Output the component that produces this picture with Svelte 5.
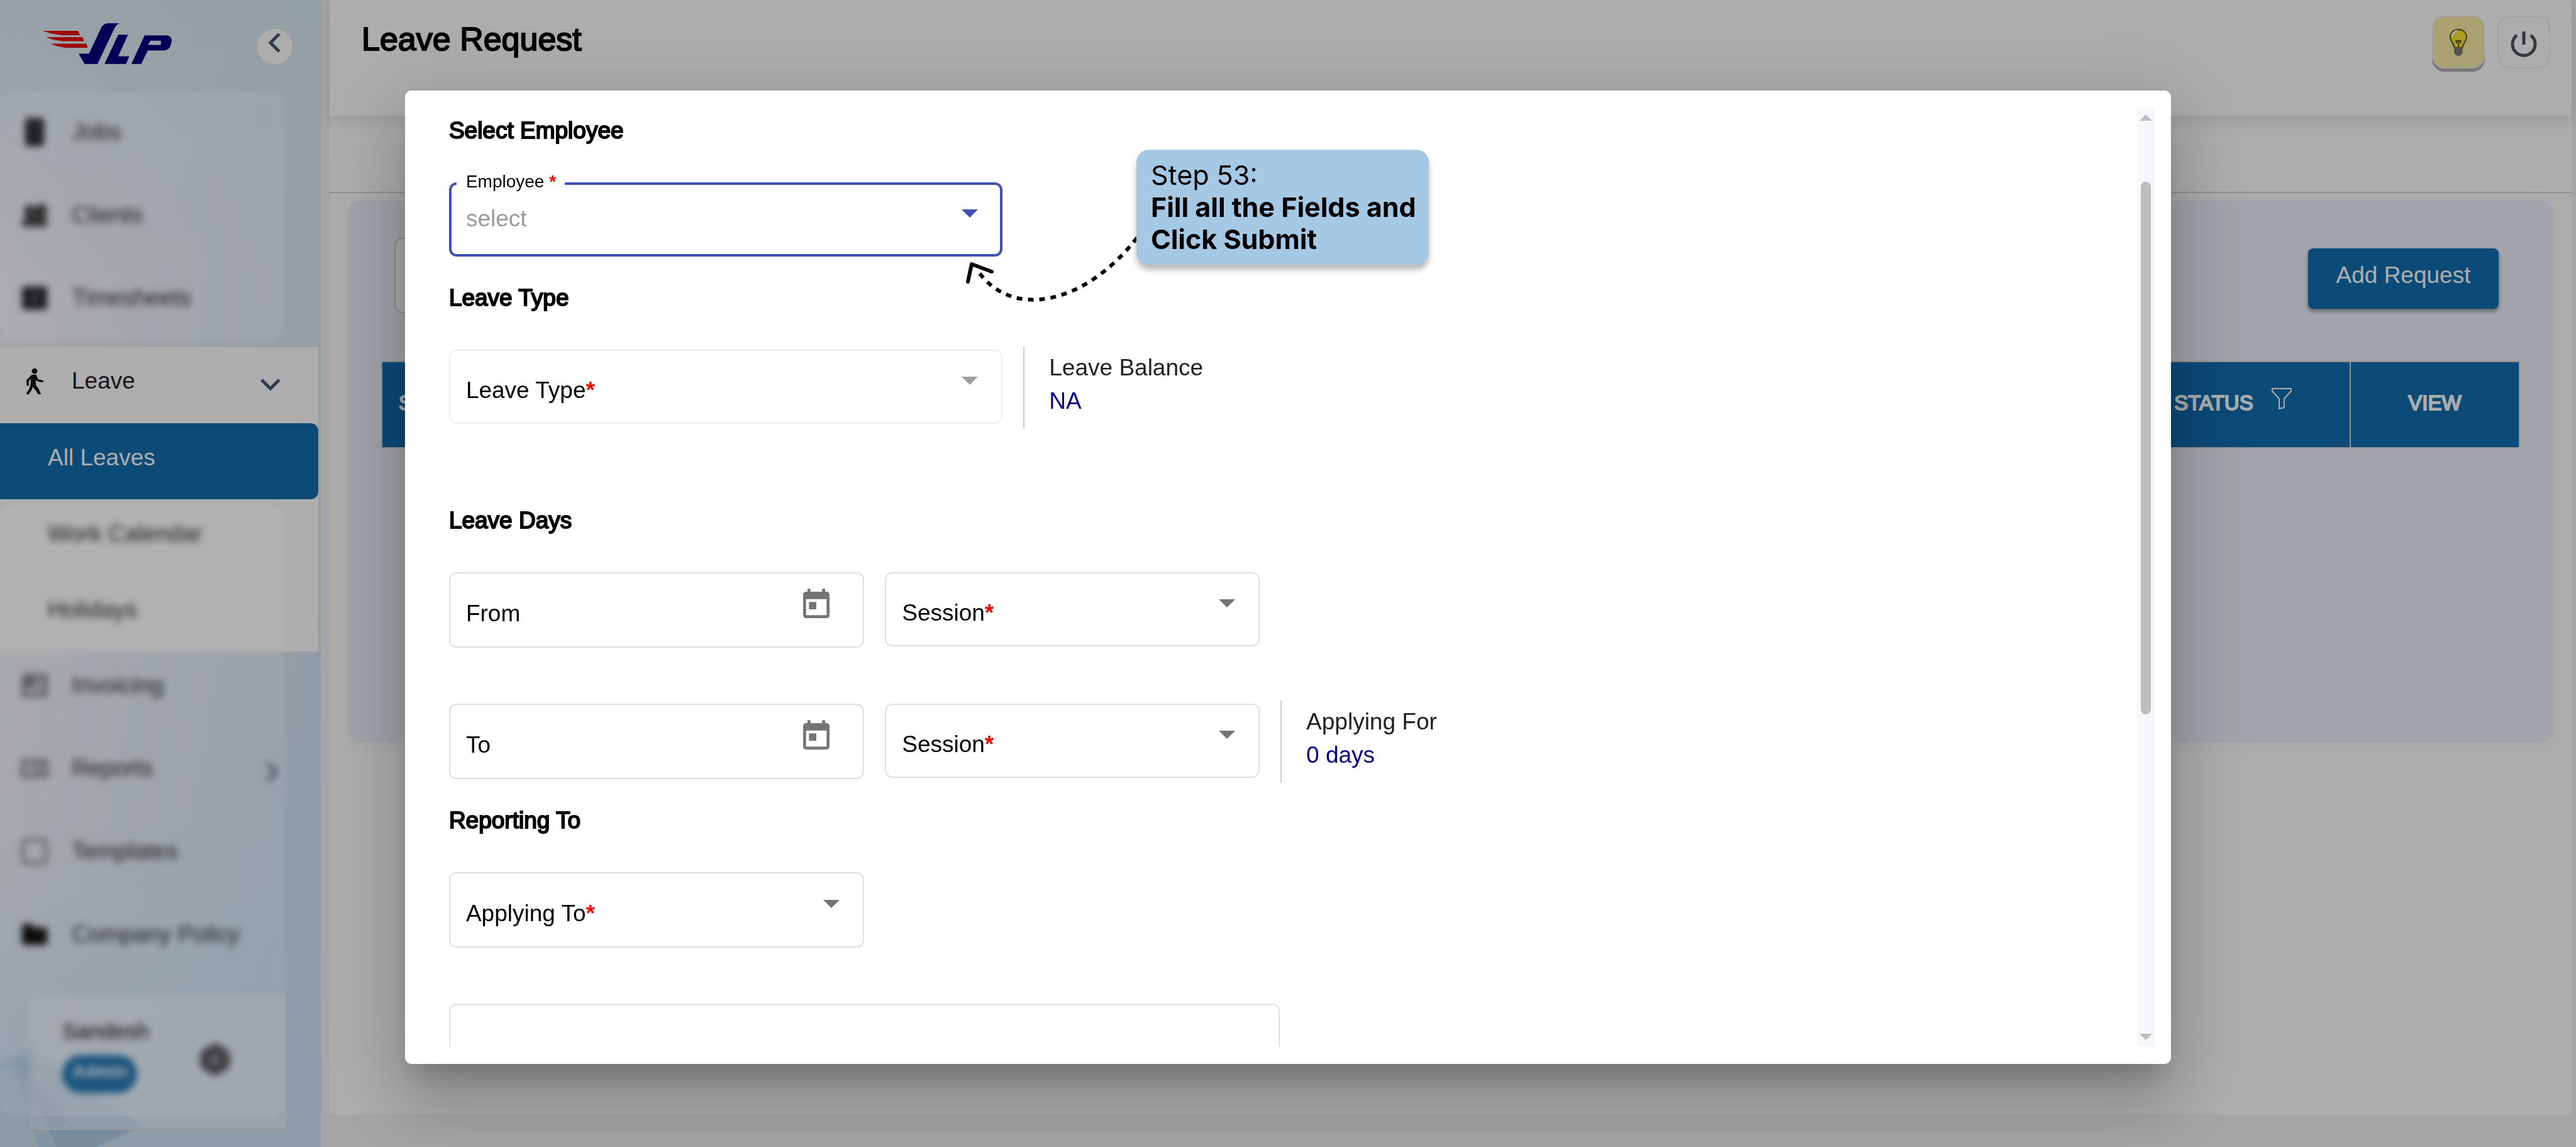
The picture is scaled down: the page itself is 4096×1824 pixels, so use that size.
<script>
  const topItems = [
    { label: 'Jobs', icon: 'jobs' },
    { label: 'Clients', icon: 'clients' },
    { label: 'Timesheets', icon: 'timesheets' }
  ];
  const leaveItems = ['All Leaves', 'Work Calendar', 'Holidays'];
  const lowerItems = [
    { label: 'Invoicing', icon: 'invoicing' },
    { label: 'Reports', icon: 'reports', more: true },
    { label: 'Templates', icon: 'templates' },
    { label: 'Company Policy', icon: 'policy' }
  ];
  const dayRows = [
    { id: 'from', label: 'From' },
    { id: 'to', label: 'To', aside: true }
  ];
</script>

{#snippet icon(name)}
  <svg class="nav-icon" viewBox="0 0 24 24" aria-hidden="true">
    {#if name === 'jobs'}
      <path fill="#0d0f10" d="M6 0h12q2 0 2 2v20q0 2-2 2H6q-2 0-2-2V2q0-2 2-2zm2 6v1h8V6zm0 9v1h8v-1z" fill-rule="evenodd" />
    {:else if name === 'clients'}
      <path fill="#333" d="M1 22c0-6 2-8 5-9a5 5 0 1 1 5-1l1 1 1-2a5.500 5.500 0 1 1 7 2c2 1 3 4 3 9z" />
    {:else if name === 'timesheets'}
      <path fill="#16181a" d="M3 2h18q2 0 2 2v16q0 2-2 2H3q-2 0-2-2V4q0-2 2-2zm7 7v1h4V9zm0 4v1h4v-1z" fill-rule="evenodd" />
    {:else if name === 'walk'}
      <path fill="#111" d="M12 1a2.400 2.400 0 1 1 0 4.800A2.400 2.400 0 0 1 12 1zM9.500 6.500h4l1.500 4 4.500 1v1.700l-5.600-1-.8-1.700v5l2.500 3.500 2 4.500H15l-2-3.500-2.500-3-1.500 3.500-2 3H4.500l3-5 1.200-5V10L7 12v4H5v-5z" />
    {:else if name === 'invoicing'}
      <path fill="#666" d="M3 2h18q2 0 2 2v16q0 2-2 2H3q-2 0-2-2V4q0-2 2-2zm1 3v14h16V5z" fill-rule="evenodd" />
      <path fill="#666" d="M5 6h8v7H5zM15 7h4v2h-4zM15 11h4v2h-4zM5 15h14v1H5z" />
    {:else if name === 'reports'}
      <path fill="#777" d="M2 4h20q2 0 2 2v12q0 2-2 2H2q-2 0-2-2V6q0-2 2-2zm1 3v10h18V7z" fill-rule="evenodd" />
      <path fill="#888" d="M5 9h3v2H5zM10 8h9v2h-9zM5 13h3v2H5zM10 11h9v2h-9zM10 14h9v2h-9z" />
    {:else if name === 'templates'}
      <rect x="2" y="2" width="20" height="20" rx="3" fill="none" stroke="#555" stroke-width="2" />
    {:else}
      <path fill="#000" d="M2 3h7l3 3h9q2 0 2 2v11q0 2-2 2H3q-2 0-2-2V5q0-2 1-2z" />
    {/if}
  </svg>
{/snippet}

{#snippet caret()}
  <svg class="caret" viewBox="0 0 26 13" aria-hidden="true"><path d="M0 0h26L13 13z" /></svg>
{/snippet}

<div class="shell">
  <aside class="sidebar">
    <svg class="facets" viewBox="0 0 260 180" aria-hidden="true">
      <path fill="#bfdaf0" d="M0 46L47 24L230 148L155 180H0Z" />
      <path fill="#cfe4f2" d="M0 50L22 60L62 180H0Z" />
      <path fill="#b3cee6" d="M20 44L47 40V96L90 180H150L210 150L120 150L60 90Z" />
    </svg>
    <div class="brand">
      <svg class="logo" viewBox="68 37 205 65" role="img" aria-label="VLP">
        <g fill="#eb0f00">
          <path d="M68 49H124L127.500 56H98Q80 54 68 49Z" />
          <path d="M73.500 59H131.500L133.500 65.500H100Q84 64 73.500 59Z" />
          <path d="M80.500 69.500H137.500L139.500 76H105Q90 74 80.500 69.500Z" />
        </g>
        <g fill="#03007e">
          <path d="M125 85.300H141.500L161 44Q165 37 172 37H190Q184 39.500 180.700 47.800L155 101.700H134.500Z" />
          <path d="M188 55.300H203.500L188 89.400H205.500L200.500 101.700H166.200Z" />
          <path fill-rule="evenodd" d="M230 56.300H265Q273 57 273 65L271 73Q268.700 80.200 260 80.200H235L224.500 101.700H208.800ZM239 64.800L235.600 71.600H255.500L256.300 64.800Z" />
        </g>
      </svg>
      <button class="collapse" aria-label="Collapse menu">
        <svg viewBox="0 0 20 32" aria-hidden="true"><path d="M17 2L3 16L17 30" /></svg>
      </button>
    </div>
    <nav>
      {#each topItems as item}
        <a class="item" href="#{item.icon}">{@render icon(item.icon)}<span>{item.label}</span></a>
      {/each}
      <div class="group">
        <a class="item open" href="#leave">
          {@render icon('walk')}<span>Leave</span>
          <svg class="chevron" viewBox="0 0 34 34" aria-hidden="true"><path d="M3 9L17 23L31 9" /></svg>
        </a>
        {#each leaveItems as label, i}
          <a class="sub" class:active={i === 0} href="#leave-{i}">{label}</a>
        {/each}
      </div>
      {#each lowerItems as item}
        <a class="item" href="#{item.icon}">
          {@render icon(item.icon)}<span>{item.label}</span>
          {#if item.more}
            <svg class="chevron" viewBox="0 0 34 34" aria-hidden="true"><path d="M7 3L21 17L7 31" /></svg>
          {/if}
        </a>
      {/each}
    </nav>
    <div class="profile">
      <div class="who">
        <span class="name">Sandesh</span>
        <span class="role">Admin</span>
      </div>
      <button class="gear" aria-label="Settings">
        <svg viewBox="0 0 50 54" aria-hidden="true"><path fill="#505254" fill-rule="evenodd" d="M18 2H32L36 8L44 10L50 22L48 27L50 32L44 44L36 46L32 52H18L14 46L6 44L0 32L2 27L0 22L6 10L14 8ZM25 23A4 4 0 1 0 25 31A4 4 0 1 0 25 23Z" /></svg>
      </button>
    </div>
  </aside>

  <main class="page">
    <header>
      <h1>Leave Request</h1>
      <div class="tools">
        <button class="tool bulb" aria-label="Tips">
          <svg viewBox="0 0 28 44" aria-hidden="true">
            <path d="M14 2C6 2 1 7 1 14C1 20 6 23 8 31H20C22 23 27 20 27 14C27 7 22 2 14 2Z" fill="#fbe72a" stroke="#5a5520" stroke-width="2" />
            <path d="M4 13Q5 6 12 4" fill="none" stroke="#fff" stroke-width="3" />
            <path d="M9 20H19M14 20V31M11 21V24M17 21V24" fill="none" stroke="#6a5a00" stroke-width="2" />
            <path d="M8 31H20V39L17 43H11L8 39Z" fill="#8a8a86" stroke="#55554f" stroke-width="1" />
            <path d="M8 35H20M9 39H19" stroke="#4a4a45" stroke-width="1" />
          </svg>
        </button>
        <button class="tool power" aria-label="Log out">
          <svg viewBox="0 0 42 42" aria-hidden="true"><path d="M21 1V22M10 7A18 18 0 1 0 32 7" fill="none" stroke="#4c5561" stroke-width="5" /></svg>
        </button>
      </div>
    </header>
    <div class="tabs"></div>
    <section class="panel">
      <div class="toolbar">
        <input class="search" type="search" aria-label="Search" />
        <button class="add">Add Request</button>
      </div>
      <table>
        <thead>
          <tr>
            <th class="serial">S.NO</th>
            <th class="status">
              <span>STATUS
                <svg viewBox="0 0 34 36" aria-hidden="true"><path d="M2 2H32V6L21 18V32L13 34V18L2 6Z" fill="none" stroke="#fff" stroke-width="2" stroke-linejoin="round" /></svg>
              </span>
            </th>
            <th class="view">VIEW</th>
          </tr>
        </thead>
      </table>
    </section>
  </main>
</div>

<div class="backdrop">
  <div class="frost upper"></div>
  <div class="frost lower"></div>

  <div class="modal" role="dialog" aria-label="Leave request form">
    <form class="body">
      <h2>Select Employee</h2>
      <div class="row">
        <div class="field wide focused">
          <label for="employee">Employee <b>*</b></label>
          <select id="employee"><option>select</option></select>
          {@render caret()}
        </div>
      </div>

      <h2>Leave Type</h2>
      <div class="row">
        <div class="field wide disabled">
          <label for="type">Leave Type<b>*</b></label>
          <select id="type" disabled><option></option></select>
          {@render caret()}
        </div>
        <div class="note"><span>Leave Balance</span><span class="value">NA</span></div>
      </div>

      <h2 class="spaced">Leave Days</h2>
      {#each dayRows as row}
        <div class="row days">
          <div class="field date">
            <label for={row.id}>{row.label}</label>
            <input id={row.id} type="text" />
            <svg class="calendar" viewBox="0 0 24 24" aria-hidden="true"><path d="M19 3h-1V1h-2v2H8V1H6v2H5c-1.110 0-1.990.9-1.990 2L3 19c0 1.100.89 2 2 2h14c1.100 0 2-.9 2-2V5c0-1.100-.9-2-2-2zm0 16H5V8h14v11zM7 10h5v5H7z" /></svg>
          </div>
          <div class="field session">
            <label for="{row.id}-session">Session<b>*</b></label>
            <select id="{row.id}-session"><option></option></select>
            {@render caret()}
          </div>
          {#if row.aside}
            <div class="note"><span>Applying For</span><span class="value">0 days</span></div>
          {/if}
        </div>
      {/each}

      <h2>Reporting To</h2>
      <div class="row">
        <div class="field date">
          <label for="approver">Applying To<b>*</b></label>
          <select id="approver"><option></option></select>
          {@render caret()}
        </div>
      </div>
      <textarea aria-label="Reason"></textarea>
    </form>

    <div class="scrollbar" aria-hidden="true">
      <svg viewBox="0 0 20 10"><path d="M10 0L20 10H0Z" /></svg>
      <div class="track"><div class="thumb"></div></div>
      <svg viewBox="0 0 20 10"><path d="M0 0H20L10 10Z" /></svg>
    </div>

    <svg class="pointer" viewBox="1530 370 285 115" aria-hidden="true">
      <path d="M1808 378C1725 485 1607 510 1553 428" stroke-dasharray="9 9" />
      <path d="M1539 448L1545 420L1577 432" stroke-linecap="round" stroke-linejoin="round" />
    </svg>
    <div class="callout">Step 53:<br /><strong>Fill all the Fields and<br />Click Submit</strong></div>
  </div>
</div>

<style>
  :global(body) {
    margin: 0;
    overflow: hidden;
    background: #f3f3f3;
  }
  :global(#app) {
    font-family: 'Liberation Sans', Arial, sans-serif;
    font-size: 37px;
    color: #000;
  }
  .shell,
  .backdrop,
  .shell *,
  .backdrop * {
    box-sizing: border-box;
  }
  button,
  input,
  select,
  textarea {
    font: inherit;
    border: 0;
    margin: 0;
    padding: 0;
    background: none;
  }
  a {
    color: inherit;
    text-decoration: none;
  }
  svg {
    display: block;
  }

  .shell {
    display: flex;
    min-height: 100vh;
    padding-right: 7px;
  }

  /* Sidebar */
  .sidebar {
    position: relative;
    flex: none;
    width: 511px;
    margin-right: 13px;
    display: flex;
    flex-direction: column;
    background:
      linear-gradient(172deg, rgba(214, 234, 246, 0.8), transparent 25%, transparent 70%, rgba(209, 232, 250, 0.9) 95%),
      linear-gradient(100deg, #f8f9fb, #eaeff6 35%, #dceaf3 70%, #d3e6f7 90%, #cfe6f2);
  }
  .facets {
    position: absolute;
    left: 0;
    bottom: 0;
    width: 260px;
    height: 180px;
  }
  .brand {
    display: flex;
    align-items: flex-start;
    justify-content: space-between;
    padding: 37px 44px 0 68px;
    height: 156px;
  }
  .logo {
    width: 205px;
    height: 65px;
  }
  .collapse {
    width: 60px;
    height: 60px;
    margin-top: 7px;
    border-radius: 50%;
    border: 2px solid #e8e8e8;
    background: #fff;
    display: flex;
    justify-content: center;
    padding-top: 6px;
  }
  .collapse svg {
    width: 20px;
    height: 32px;
  }
  .collapse path,
  .chevron path {
    fill: none;
    stroke: #44546c;
    stroke-width: 5;
  }
  .item,
  .sub {
    display: flex;
    align-items: center;
    height: 121px;
    padding-bottom: 14px;
    color: #212121;
  }
  .item {
    margin-bottom: 11px;
    padding-left: 33px;
    gap: 37px;
  }
  .nav-icon {
    width: 44px;
    height: 44px;
  }
  .chevron {
    width: 34px;
    height: 34px;
    margin: 12px 59px 0 auto;
  }
  .group {
    width: 506px;
    background: #fff;
  }
  .item.open {
    margin: 0;
  }
  .sub {
    padding-left: 76px;
    padding-bottom: 11px;
  }
  .sub.active {
    background: #136eb2;
    color: #fff;
    border-radius: 0 12px 12px 0;
  }
  .profile {
    position: relative;
    margin: 18px 54px 26px 47px;
    height: 215px;
    display: flex;
    justify-content: space-between;
    padding: 36px 88px 0 50px;
    border: 2px solid #e2e4e2;
    border-radius: 10px;
    background: rgba(255, 255, 255, 0.4);
  }
  .who {
    display: flex;
    flex-direction: column;
    align-items: flex-start;
    gap: 18px;
    font-size: 35px;
    line-height: 40px;
  }
  .role {
    height: 60px;
    padding: 0 16px;
    line-height: 52px;
    font-size: 28px;
    font-weight: bold;
    color: #fff;
    background: #136eb2;
    border-radius: 30px;
  }
  .gear {
    width: 50px;
    height: 54px;
    margin-top: 38px;
  }

  /* Page */
  .page {
    flex: 1;
    min-width: 0;
    background: #fff;
    margin-bottom: 52px;
  }
  header {
    height: 184px;
    padding: 25px 34px 0 51px;
    display: flex;
    justify-content: space-between;
    align-items: flex-start;
    box-shadow: 0 8px 24px rgba(0, 0, 0, 0.12);
  }
  h1 {
    margin: 7px 0 0;
    font-size: 52px;
    line-height: 60px;
    font-weight: 400;
    -webkit-text-stroke: 2px #000;
  }
  .tools {
    display: flex;
    gap: 20px;
  }
  .tool {
    display: flex;
    justify-content: center;
    width: 84px;
    height: 84px;
    padding-top: 22px;
    border: 2px solid #f0f0f0;
    border-radius: 20px;
  }
  .tool.bulb {
    background: #faeda4;
    border-color: #eee;
    padding-top: 18px;
    box-shadow: 0 5px 0 #b0b0b0;
  }
  .bulb svg {
    width: 28px;
    height: 44px;
  }
  .power svg {
    width: 42px;
    height: 42px;
  }
  .tabs {
    height: 123px;
    border-bottom: 2px solid #d2d2d2;
  }
  .panel {
    margin: 12px 28px 0;
    padding: 59px 54px 0;
    min-height: 862px;
    border-radius: 22px;
    background: #edf4fd;
    box-shadow: 0 4px 28px rgba(0, 0, 0, 0.03);
  }
  .toolbar {
    display: flex;
    justify-content: space-between;
    align-items: center;
    padding: 0 34px 0 21px;
  }
  .search {
    width: 700px;
    height: 120px;
    background: #fff;
    border: 2px solid #d0d0d0;
    border-radius: 14px;
  }
  .add {
    width: 303px;
    height: 96px;
    margin-top: 10px;
    padding-bottom: 10px;
    border-radius: 8px;
    background: #136eb2;
    color: #fff;
    box-shadow: 0 4px 6px rgba(0, 0, 0, 0.4);
  }
  table {
    width: 100%;
    margin-top: 76px;
    border-collapse: collapse;
    table-layout: fixed;
    color: #fff;
    background: #136eb2;
    font-size: 33px;
  }
  th {
    height: 137px;
    padding: 0 0 6px;
    border: 2px solid #d6d6d6;
    font-weight: 400;
    -webkit-text-stroke: 2px #fff;
  }
  .serial {
    text-align: left;
    padding-left: 26px;
  }
  .status {
    width: 372px;
  }
  .status span {
    display: flex;
    justify-content: center;
    gap: 28px;
  }
  .status svg {
    width: 34px;
    height: 36px;
    margin-top: -6px;
  }
  .view {
    width: 269px;
  }

  /* Overlay */
  .backdrop {
    position: fixed;
    inset: 0;
    display: flex;
    justify-content: center;
    padding: 144px 0 132px;
    background: rgba(0, 0, 0, 0.32);
  }
  .frost {
    position: absolute;
    left: 0;
    width: 452px;
    border-radius: 20px;
    background: rgba(255, 255, 255, 0.06);
    backdrop-filter: blur(6px);
  }
  .frost.upper {
    top: 146px;
    height: 396px;
  }
  .frost.lower {
    top: 802px;
    height: 973px;
  }
  .modal {
    position: relative;
    display: flex;
    width: 68.56vw;
    padding: 27px 26px 27px 70px;
    background: #fff;
    border-radius: 10px;
    box-shadow:
      0 29px 39px -18px rgba(0, 0, 0, 0.2),
      0 63px 100px 8px rgba(0, 0, 0, 0.14),
      0 24px 121px 21px rgba(0, 0, 0, 0.12);
  }
  .body {
    flex: 1;
    min-width: 0;
    overflow: hidden;
    padding-top: 15px;
  }
  h2 {
    margin: 44px 0 60px;
    font-size: 37px;
    line-height: 44px;
    font-weight: 400;
    -webkit-text-stroke: 2px #000;
  }
  h2:first-child {
    margin-top: 0;
  }
  h2.spaced {
    margin-top: 132px;
  }
  .row {
    display: flex;
    align-items: flex-start;
    gap: 33px;
  }
  .days + .days {
    margin-top: 89px;
  }
  .field {
    display: grid;
    grid-template-columns: 100%;
    align-items: center;
    height: 118px;
    border: 2px solid #e0e0e0;
    border-radius: 12px;
  }
  .field > * {
    grid-area: 1 / 1;
  }
  .field label {
    padding: 11px 0 0 25px;
    pointer-events: none;
  }
  .field input,
  .field select {
    width: 100%;
    height: 100%;
    appearance: none;
    outline: 0;
  }
  .field b {
    color: #f00;
  }
  .wide {
    width: 32.8%;
  }
  .date {
    width: 24.6%;
    height: 120px;
  }
  .session {
    width: 22.2%;
  }
  .focused {
    border: 4px solid #3f51b5;
  }
  .focused label {
    align-self: start;
    justify-self: start;
    margin: -21px 0 0 8px;
    padding: 0 14px 0 15px;
    font-size: 28px;
    line-height: 32px;
    background: #fff;
  }
  .focused select {
    padding: 0 0 4px 23px;
    color: #999;
  }
  .disabled {
    border-color: #efefef;
  }
  .caret,
  .calendar {
    justify-self: end;
    pointer-events: none;
    fill: #757575;
  }
  .caret {
    width: 26px;
    height: 13px;
    margin: 0 37px 19px 0;
  }
  .focused .caret {
    fill: #3f51b5;
    margin-right: 35px;
  }
  .disabled .caret {
    fill: #9e9e9e;
  }
  .calendar {
    width: 56px;
    height: 56px;
    margin: 0 46px 16px 0;
  }
  .note {
    display: flex;
    flex-direction: column;
    justify-content: center;
    height: 130px;
    margin: -5px 0 -7px;
    padding: 0 0 11px 39px;
    border-left: 2px solid #ccc;
    line-height: 53px;
    color: #212121;
  }
  .value {
    color: #00008b;
  }
  textarea {
    display: block;
    width: 49.2%;
    height: 240px;
    margin-top: 89px;
    border: 2px solid #e0e0e0;
    border-radius: 12px;
    resize: none;
  }
  .scrollbar {
    flex: none;
    width: 28px;
    display: flex;
    flex-direction: column;
    align-items: center;
    padding: 11px 0;
    background: #f5f7fc;
  }
  .scrollbar svg {
    flex: none;
    width: 20px;
    height: 10px;
    fill: #bdbdbd;
  }
  .track {
    flex: 1;
    width: 16px;
    padding: 97px 0 0;
  }
  .thumb {
    height: 62.5%;
    border-radius: 8px;
    background: #bdbdbd;
  }
  .pointer {
    position: absolute;
    left: 886px;
    top: 226px;
    width: 285px;
    height: 115px;
    overflow: visible;
    fill: none;
    stroke: #0d0000;
    stroke-width: 6;
  }
  .callout {
    position: absolute;
    left: 1163px;
    top: 94px;
    padding: 15px 20px 15px 23px;
    font-family: Inter, sans-serif;
    font-size: 43px;
    line-height: 51px;
    white-space: nowrap;
    background: #a5c8e4;
    border-radius: 20px;
    box-shadow: 0 8px 10px rgba(0, 0, 0, 0.28);
  }
</style>
